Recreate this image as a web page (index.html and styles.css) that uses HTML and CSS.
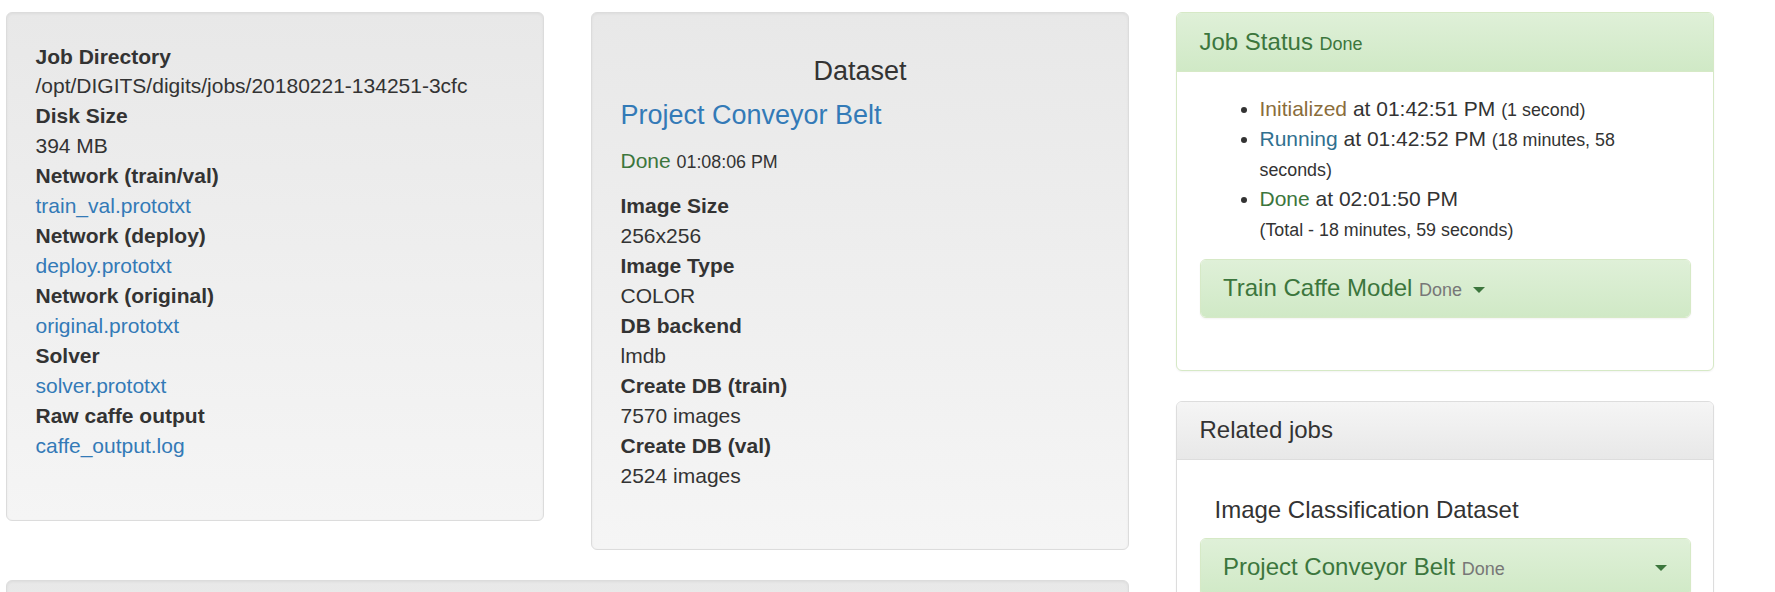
FILE: index.html
```html
<!DOCTYPE html>
<html lang="en">
<head>
<meta charset="utf-8">
<title>DIGITS Job</title>
<link rel="stylesheet" href="styles.css">
</head>
<body>
<div class="page">
  <div class="layout">
    <div class="main">
      <div class="main-row">
        <div class="well">
          <dl class="info">
            <dt>Job Directory</dt>
            <dd>/opt/DIGITS/digits/jobs/20180221-134251-3cfc</dd>
            <dt>Disk Size</dt>
            <dd>394 MB</dd>
            <dt>Network (train/val)</dt>
            <dd><a href="#">train_val.prototxt</a></dd>
            <dt>Network (deploy)</dt>
            <dd><a href="#">deploy.prototxt</a></dd>
            <dt>Network (original)</dt>
            <dd><a href="#">original.prototxt</a></dd>
            <dt>Solver</dt>
            <dd><a href="#">solver.prototxt</a></dd>
            <dt>Raw caffe output</dt>
            <dd><a href="#">caffe_output.log</a></dd>
          </dl>
        </div>
        <div class="well">
          <h4 class="heading heading-center">Dataset</h4>
          <h4 class="heading"><a href="#">Project Conveyor Belt</a></h4>
          <p class="status-line"><span class="text-success">Done</span> <small class="time">01:08:06 PM</small></p>
          <dl class="info">
            <dt>Image Size</dt>
            <dd>256x256</dd>
            <dt>Image Type</dt>
            <dd>COLOR</dd>
            <dt>DB backend</dt>
            <dd>lmdb</dd>
            <dt>Create DB (train)</dt>
            <dd>7570 images</dd>
            <dt>Create DB (val)</dt>
            <dd>2524 images</dd>
          </dl>
        </div>
      </div>
      <div class="well well-wide"></div>
    </div>
    <div class="side">
      <div class="panel panel-success">
        <div class="panel-heading panel-heading-main">
          <h3 class="panel-title">Job Status <small class="text-success">Done</small></h3>
        </div>
        <div class="panel-body">
          <ul class="status-list">
            <li><span class="text-warning">Initialized</span> at 01:42:51 PM <small>(1 second)</small></li>
            <li><span class="text-info">Running</span> at 01:42:52 PM <small>(18 minutes, 58 seconds)</small></li>
            <li><span class="text-success">Done</span> at 02:01:50 PM<br><small>(Total - 18 minutes, 59 seconds)</small></li>
          </ul>
          <div class="panel panel-success">
            <div class="panel-heading">
              <h4 class="panel-title">Train Caffe Model <small class="muted">Done</small> <span class="caret"></span></h4>
            </div>
          </div>
        </div>
      </div>
      <div class="panel panel-default">
        <div class="panel-heading">
          <h3 class="panel-title">Related jobs</h3>
        </div>
        <div class="panel-body">
          <h4 class="related-title">Image Classification Dataset</h4>
          <div class="panel panel-success">
            <div class="panel-heading">
              <h4 class="panel-title title-split"><span>Project Conveyor Belt <small class="muted">Done</small></span><span class="caret"></span></h4>
            </div>
          </div>
        </div>
      </div>
    </div>
  </div>
</div>
</body>
</html>
```

FILE: styles.css
```css
html, body {
  margin: 0;
  overflow: hidden;
}

body {
  font-family: "Liberation Sans", Arial, sans-serif;
  font-size: 21px;
  line-height: 1.428571;
  color: #333;
  background: #fff;
}

a {
  color: #337ab7;
  text-decoration: none;
}

.page {
  padding: 12px 0 0 6px;
}

.layout {
  display: flex;
  align-items: flex-start;
  gap: 47px;
}

.main {
  width: 1123px;
  flex: none;
}

.main-row {
  display: flex;
  align-items: flex-start;
  gap: 47px;
}

.well {
  box-sizing: border-box;
  width: 538px;
  min-height: 30px;
  padding: 28.5px;
  margin-bottom: 30px;
  border: 1px solid #dcdcdc;
  border-radius: 6px;
  background: linear-gradient(to bottom, #e8e8e8 0, #f5f5f5 100%);
  box-shadow: inset 0 1px 3px rgba(0, 0, 0, .05), 0 1px 0 rgba(255, 255, 255, .1);
}

.well-wide {
  width: 1123px;
  height: 200px;
}

.info {
  margin: 0 0 30px;
}

.info dt {
  font-weight: bold;
}

.info dd {
  margin: 0;
}

.heading {
  font-size: 27px;
  line-height: 1.1;
  font-weight: normal;
  margin: 15px 0;
}

.heading-center {
  text-align: center;
}

.status-line {
  margin: 0 0 15px;
}

.time {
  font-size: 85%;
}

.text-success { color: #3c763d; }
.text-warning { color: #8a6d3b; }
.text-info { color: #31708f; }
.muted { color: #777; }

.side {
  width: 538px;
  flex: none;
}

.panel {
  margin-bottom: 30px;
  background: #fff;
  border: 1px solid transparent;
  border-radius: 6px;
  box-shadow: 0 1px 2px rgba(0, 0, 0, .05);
}

.panel-heading {
  padding: 15px 22.5px;
  border-bottom: 1px solid transparent;
  border-radius: 5px 5px 0 0;
}

.panel-heading-main {
  padding-top: 16px;
  padding-bottom: 15.5px;
}

.panel-title {
  margin: 0;
  font-size: 24px;
  line-height: 1.1;
  font-weight: normal;
}

.panel-title small {
  font-size: 18px;
}

.title-split {
  display: flex;
  justify-content: space-between;
  align-items: center;
}

.panel-body {
  padding: 22.5px;
}

.panel-success {
  border-color: #d6e9c6;
}

.panel-success > .panel-heading {
  color: #3c763d;
  border-color: #d6e9c6;
  background: linear-gradient(to bottom, #dff0d8 0, #d0e9c6 100%);
}

.panel-body .panel-success > .panel-heading {
  border-bottom: 0;
  border-radius: 5px;
}

.panel-default {
  border-color: #ddd;
}

.panel-default > .panel-heading {
  color: #333;
  border-color: #ddd;
  background: linear-gradient(to bottom, #f5f5f5 0, #e8e8e8 100%);
}

.status-list {
  margin: 0 0 15px;
  padding: 0 6px 0 60px;
}

.status-list small {
  font-size: 85%;
}

.related-title {
  font-size: 24px;
  line-height: 1.1;
  font-weight: normal;
  margin: 15px 0 15px 15px;
}

.caret {
  display: inline-block;
  width: 0;
  height: 0;
  margin-left: 4px;
  vertical-align: middle;
  border-top: 6px solid;
  border-right: 6px solid transparent;
  border-left: 6px solid transparent;
}
```
